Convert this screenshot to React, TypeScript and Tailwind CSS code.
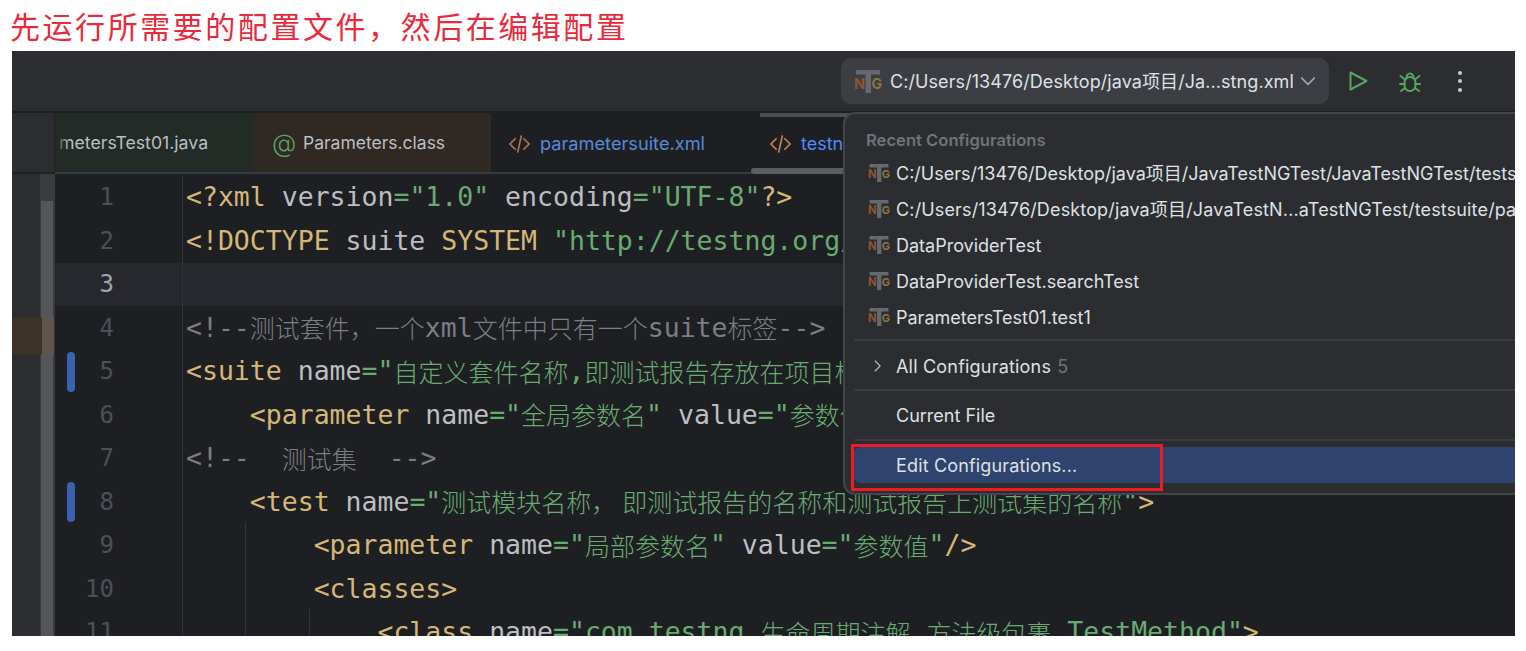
import React from "react";

const T = "#d5b778", A = "#bcbec4", S = "#6aab73", C = "#7a7e85";
const CJK = "text-[25px] [font-family:'Noto_Sans_CJK_SC',sans-serif] font-light";
const GAP = "text-[10px]";

const NgIcon = ({ className }: { className: string }) => (
  <svg viewBox="0 0 28 23" className={className}>
    <rect x="2" y="0" width="24" height="4.5" fill="#666a70" />
    <rect x="11.5" y="0" width="5.5" height="23" fill="#666a70" />
    <text x="0" y="18.5" fontSize="14.5" fontWeight="700" fill="#8f5434" fontFamily="Inter, sans-serif">N</text>
    <text x="17.5" y="18.5" fontSize="14" fontWeight="700" fill="#8d7643" fontFamily="Inter, sans-serif">G</text>
  </svg>
);

const XmlIcon = ({ color }: { color: string }) => (
  <svg viewBox="0 0 24 20" className="w-[23px] h-[20px] shrink-0" fill="none" stroke={color} strokeWidth="1.8">
    <path d="M8 4 L2 10 L8 16" />
    <path d="M16 4 L22 10 L16 16" />
    <path d="M14 1 L10 19" />
  </svg>
);

type Tok = [string, string, string?];

const lines: Tok[][] = [
  [["<?xml ", T], ["version", A], ["=\"1.0\" ", S], ["encoding", A], ["=\"UTF-8\"", S], ["?>", T]],
  [["<!DOCTYPE ", T], ["suite ", A], ["SYSTEM ", T], ["\"http://testng.org/testng-1.0.dtd\"", S]],
  [],
  [["<!--", C], ["测试套件，一个", C, CJK], ["xml", C], ["文件中只有一个", C, CJK], ["suite", C], ["标签", C, CJK], ["-->", C]],
  [["<suite ", T], ["name", A], ["=\"", S], ["自定义套件名称", S, CJK], [",", S], ["即测试报告存放在项目根目录下的文件夹名称", S, CJK], ["\"", S]],
  [["    <parameter ", T], ["name", A], ["=\"", S], ["全局参数名", S, CJK], ["\" ", S], ["value", A], ["=\"", S], ["参数值", S, CJK], ["\"", S]],
  [["<!--  ", C], ["测试集", C, CJK], ["  -->", C]],
  [["    <test ", T], ["name", A], ["=\"", S], ["测试模块名称，", S, CJK], [" ", S, GAP], ["即测试报告的名称和测试报告上测试集的名称", S, CJK], ["\"", S], [">", T]],
  [["        <parameter ", T], ["name", A], ["=\"", S], ["局部参数名", S, CJK], ["\" ", S], ["value", A], ["=\"", S], ["参数值", S, CJK], ["\"", S], ["/>", T]],
  [["        <classes>", T]],
  [["            <class ", T], ["name", A], ["=\"com.testng.", S], ["生命周期注解", S, CJK], [".", S], ["方法级包裹", S, CJK], [".TestMethod\"", S], [">", T]],
];

const Row = ({ n, toks, cur, mark }: { n: number; toks: Tok[]; cur?: boolean; mark?: boolean }) => (
  <div className={`flex h-[43.5px] items-center relative ${cur ? "bg-[#26282e]" : ""}`}>
    {mark && <div className="absolute left-[12px] top-[2px] w-[8px] h-[40px] rounded-full bg-[#3a62b0]" />}
    <div className={`w-[127px] shrink-0 h-full flex items-center justify-end pr-[68px] text-[24px] ${cur ? "text-[#a1a3ab]" : "text-[#4b5059]"}`}>
      {n}
    </div>
    <div className="pl-[3px] h-full flex items-center whitespace-pre border-l border-[#313438] text-[26.5px]">
      {toks.map((t, i) => (
        <span key={i} style={{ color: t[1] }} className={t[2] ?? ""}>
          {t[0]}
        </span>
      ))}
    </div>
  </div>
);

const MenuRow = ({ label, wide }: { label: string; wide?: boolean }) => (
  <div className="h-[36px] flex items-center pl-[23px] whitespace-nowrap">
    <NgIcon className="w-[22px] h-[22px] shrink-0" />
    <span className={`ml-[6px] text-[#dfe1e5] ${wide ? "tracking-[0.15px]" : ""}`}>{label}</span>
  </div>
);

const Sep = () => <div className="h-[2px] bg-[#393b40] ml-[9px]" />;

export default function App() {
  return (
    <div className="w-[1526px] h-[651px] bg-white overflow-hidden [font-family:Inter,'Noto_Sans_CJK_SC',sans-serif]">
      <div className="h-[51px] pl-[10px] pt-[4px] text-[30px] leading-[42px] tracking-[2.55px] text-[#e92a3a] whitespace-nowrap [font-family:'Noto_Sans_CJK_SC',sans-serif]">
        先运行所需要的配置文件，然后在编辑配置
      </div>
      <div className="ml-[12px] w-[1503px] h-[585px] bg-[#1e1f22] relative overflow-hidden">
        {/* toolbar */}
        <div className="h-[60px] bg-[#2b2d30] flex items-center justify-end pr-[53px]">
          <div className="w-[488px] h-[46px] rounded-[10px] bg-[#3c3e43] flex items-center pl-[13px] pr-[12px] text-[18px] text-[#dfe1e5] whitespace-nowrap">
            <NgIcon className="w-[28px] h-[23px] shrink-0" />
            <span className="ml-[8px] flex-1 tracking-[0.08px]">C:/Users/13476/Desktop/java项目/Ja...stng.xml</span>
            <svg viewBox="0 0 16 16" className="w-[18px] h-[18px]" fill="none" stroke="#a8abb0" strokeWidth="1.3"><path d="M2 5 L8 11 L14 5" /></svg>
          </div>
          <svg viewBox="0 0 19 20" className="w-[19px] h-[20px] ml-[20px]" fill="none" stroke="#57a65e" strokeWidth="2" strokeLinejoin="round"><path d="M1.5 1.5 L17.5 10 L1.5 18.5 Z" /></svg>
          <svg viewBox="0 0 22 21" className="w-[22px] h-[21px] ml-[31px]" fill="none" stroke="#57a65e" strokeWidth="2" strokeLinecap="round">
            <rect x="5.5" y="6" width="11" height="14" rx="5.5" />
            <path d="M7.5 6.5 A3.5 4 0 0 1 14.5 6.5" />
            <path d="M1.5 5 L5.5 8 M20.5 5 L16.5 8 M1 13 H5.5 M21 13 H16.5 M2 20 L6 17 M20 20 L16 17" />
          </svg>
          <div className="flex flex-col gap-[4.5px] ml-[37px]">
            <div className="w-[4px] h-[4px] rounded-full bg-[#c9ccd1]" />
            <div className="w-[4px] h-[4px] rounded-full bg-[#c9ccd1]" />
            <div className="w-[4px] h-[4px] rounded-full bg-[#c9ccd1]" />
          </div>
        </div>
        {/* tab row */}
        <div className="h-[2px] bg-[#1e1f22]" />
        <div className="h-[59px] flex text-[18px] bg-[#1e1f22] whitespace-nowrap">
          <div className="w-[43px] bg-[#2b2d30] border-r border-[#1e1f22]" />
          <div className="w-[199px] relative bg-[#222b26] flex items-center pt-[2px] overflow-hidden text-[#bcbec4]">
            <span className="ml-[4px] text-[17.7px]">metersTest01.java</span>
            <div className="absolute left-0 top-0 w-[14px] h-full bg-gradient-to-r from-[#222b26] to-transparent" />
          </div>
          <div className="w-[237px] bg-[#2f2823] flex items-center pt-[2px] text-[#bcbec4]">
            <span className="ml-[18px] w-[31px] text-[25px] font-light text-[#5a9e62]">@</span>
            <span className="text-[17.5px]">Parameters.class</span>
          </div>
          <div className="w-[260px] flex items-center pt-[2px] text-[#5a8ad6] pl-[17px]">
            <XmlIcon color="#b0704c" />
            <span className="ml-[9px] text-[18.2px]">parametersuite.xml</span>
          </div>
          <div className="w-[300px] relative flex items-center pt-[2px] text-[#548af7] pl-[18px]">
            <div className="absolute left-[9px] top-0 w-[100px] h-[4px] bg-[#4d4e50]" />
            <div className="absolute left-0 -bottom-[2px] w-[120px] h-[6px] rounded-l-full bg-[#5a5d63]" />
            <XmlIcon color="#c77d55" />
            <span className="ml-[9px]">testng.xml</span>
          </div>
        </div>
        <div className="h-[2px] ml-[43px] bg-[#393b40]" />
        <div className="flex h-[462px]">
          <div className="w-[43px] shrink-0 bg-[#2b2d30] flex justify-end relative">
            <div className="w-[15px] bg-[#393b40] flex justify-center">
              <div className="w-[12px] mt-[27px] mr-[1px] bg-[#555657]" />
            </div>
            <div className="absolute left-0 top-[144px] w-full h-[36px] bg-[#3d3226]" />
            <div className="absolute left-[30px] top-[144px] w-[12px] h-[36px] bg-[#5f554a]" />
          </div>
          <div className="flex-1 relative [font-family:'DejaVu_Sans_Mono','Noto_Sans_CJK_SC',monospace]">
            <div className="absolute left-[190px] top-[348px] w-px h-[120px] bg-[#313438]" />
            <div className="absolute left-[254px] top-[435px] w-px h-[40px] bg-[#313438]" />
            <div className="pt-[1.5px]">
              {lines.map((toks, i) => (
                <Row key={i} n={i + 1} toks={toks} cur={i === 2} mark={i === 4 || i === 7} />
              ))}
            </div>
          </div>
        </div>
        {/* popup */}
        <div className="absolute left-[831px] top-[61px] w-[800px] h-[383px] rounded-[12px] border-2 border-[#43454a] bg-[#2b2d30] text-[18px] pt-[11px] overflow-hidden">
          <div className="h-[30px] pl-[21px] flex items-center text-[16.6px] font-semibold text-[#6f737a]">Recent Configurations</div>
          <div>
            <MenuRow label="C:/Users/13476/Desktop/java项目/JavaTestNGTest/JavaTestNGTest/testsuite/testng.xml" />
            <MenuRow wide label="C:/Users/13476/Desktop/java项目/JavaTestN...aTestNGTest/testsuite/parametersuite.xml" />
            <MenuRow label="DataProviderTest" />
            <MenuRow label="DataProviderTest.searchTest" />
            <MenuRow label="ParametersTest01.test1" />
          </div>
          <div className="h-[4px]" />
          <Sep />
          <div className="h-[48px] flex items-center pl-[28px] pt-[2px]">
            <svg viewBox="0 0 10 16" className="w-[9px] h-[14px]" fill="none" stroke="#b4b8bf" strokeWidth="1.4"><path d="M2 2 L8 8 L2 14" /></svg>
            <span className="ml-[14px] text-[#dfe1e5] tracking-[0.2px]">All Configurations</span>
            <span className="ml-[6px] text-[#6f737a]">5</span>
          </div>
          <Sep />
          <div className="h-[48px] flex items-center pl-[51px] pt-[1px] text-[#dfe1e5]">Current File</div>
          <Sep />
          <div className="h-[6px]" />
          <div className="h-[36px] ml-[9px] rounded-l-[6px] bg-[#2e436e] flex items-center pl-[42px] text-[#dfe1e5] tracking-[0.15px]">Edit Configurations...</div>
        </div>
        {/* annotation */}
        <div className="absolute left-[839px] top-[393px] w-[312px] h-[47px] border-[3px] border-[#ed1c24]" />
      </div>
    </div>
  );
}
